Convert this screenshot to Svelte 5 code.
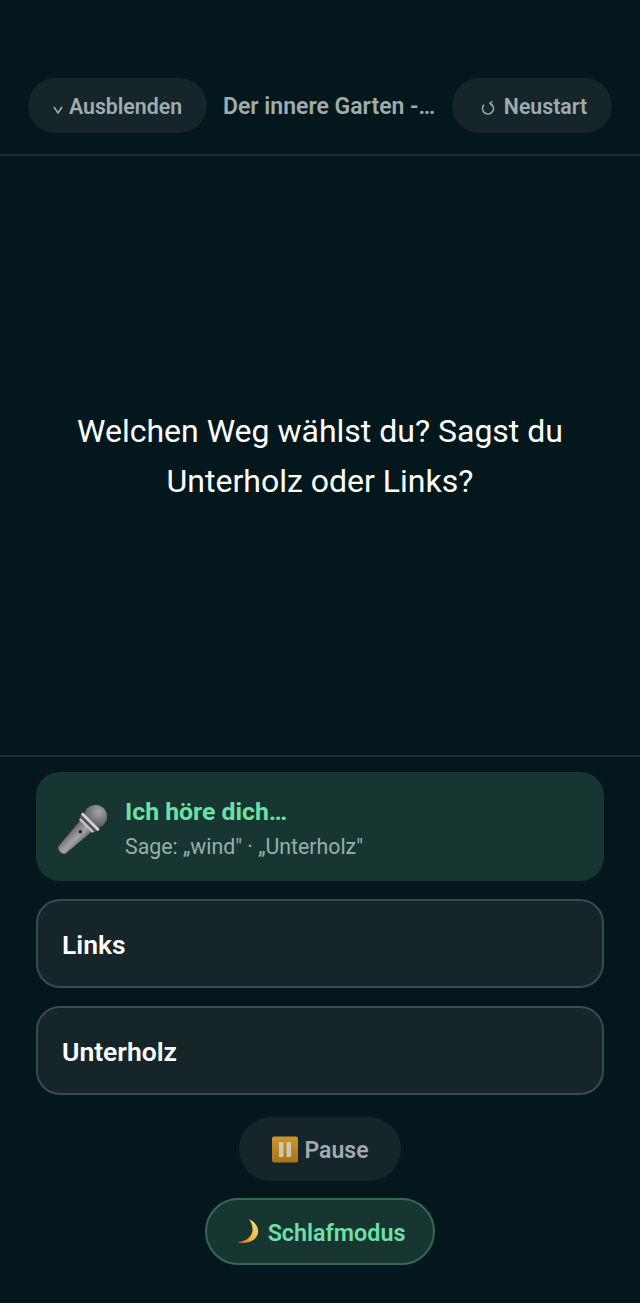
<script>
	let title = "Der innere Garten - Ein Schlafabenteuer";
	let prompt = "Welchen Weg wählst du? Sagst du Unterholz oder Links?";
	let choices = ["Links", "Unterholz"];
</script>

<div class="screen">
	<header class="topbar">
		<button class="pill hide">
			<svg class="chev" width="10" height="8" viewBox="0 0 10 8"><path d="M1 1l4 6 4-6" fill="none" stroke="currentColor" stroke-width="1.6"/></svg>
			<span>Ausblenden</span>
		</button>
		<span class="title">{title}</span>
		<button class="pill restart">
			<svg class="reload" width="14" height="15" viewBox="0 0 14 15"><path d="M3 4.700A5.500 5.500 0 1 0 9 3.400" fill="none" stroke="currentColor" stroke-width="1.500"/><path d="M11.500 1.200L8.800 3.300l2.400 2.500" fill="none" stroke="currentColor" stroke-width="1.300"/></svg>
			<span>Neustart</span>
		</button>
	</header>

	<main class="story">
		<p>{prompt}</p>
	</main>

	<section class="controls">
		<div class="listening">
			<svg class="mic" width="52" height="52" viewBox="0 0 52 52">
				<defs>
					<linearGradient id="body" x1="0" y1="0" x2="1" y2="0">
						<stop offset="0" stop-color="#6b686d"/>
						<stop offset="0.6" stop-color="#a5a3a7"/>
						<stop offset="1" stop-color="#77747a"/>
					</linearGradient>
					<radialGradient id="head" cx="0.45" cy="0.25" r="0.8">
						<stop offset="0" stop-color="#a6a5a8"/>
						<stop offset="1" stop-color="#4e4c52"/>
					</radialGradient>
				</defs>
				<g transform="translate(39.500 14.500) rotate(45)">
					<path d="M-8 12H8L5 48Q0 52-5 48Z" fill="url(#body)"/>
					<circle r="11.500" fill="url(#head)"/>
					<rect x="-12" y="6" width="24" height="3" rx="1" fill="#d4d2d6"/>
					<rect x="-11" y="9" width="22" height="2.500" fill="#55535a"/>
					<rect x="-9.500" y="11.500" width="19" height="2.500" fill="#c4c2c6"/>
					<circle cy="21.500" r="1.800" fill="#2b2a2e"/>
				</g>
			</svg>
			<div class="listen-text">
				<strong>Ich höre dich…</strong>
				<span>Sage: „wind" · „Unterholz"</span>
			</div>
		</div>

		{#each choices as choice}
			<button class="choice"><span>{choice}</span></button>
		{/each}

		<button class="pill pause">
			<svg width="27" height="27" viewBox="0 0 27 27">
				<defs>
					<linearGradient id="amber" x1="0" y1="0" x2="0" y2="1">
						<stop offset="0" stop-color="#cb952e"/>
						<stop offset="1" stop-color="#a87418"/>
					</linearGradient>
				</defs>
				<rect x="1" y="0.500" width="26" height="26" rx="2" fill="url(#amber)"/>
				<rect x="8" y="6" width="4.500" height="15" fill="#cfc7b2"/>
				<rect x="15.500" y="6" width="4.500" height="15" fill="#cfc7b2"/>
			</svg>
			<span>Pause</span>
		</button>

		<button class="pill sleep">
			<svg width="24" height="27" viewBox="0 0 24 27">
				<defs>
					<linearGradient id="moon" x1="0.8" y1="0" x2="0.2" y2="1">
						<stop offset="0" stop-color="#f7dc72"/>
						<stop offset="0.65" stop-color="#f3b545"/>
						<stop offset="1" stop-color="#e5663a"/>
					</linearGradient>
				</defs>
				<path d="M12 1C18 4 22 9 21 15 20 22 10 27 0 24 8 24 14 20 15.500 13 16 8 14 4 12 1Z" fill="url(#moon)"/>
			</svg>
			<span>Schlafmodus</span>
		</button>
	</section>
</div>

<style>
	:global(body) {
		background: #04171d;
		font-family: Roboto, "Liberation Sans", sans-serif;
	}

	.screen {
		height: 1303px;
		display: flex;
		flex-direction: column;
		background: #04171d;
	}

	button {
		font-family: inherit;
		cursor: pointer;
	}

	button span {
		position: relative;
		top: 1px;
	}

	.topbar {
		display: flex;
		align-items: center;
		gap: 16px;
		padding: 78px 28px 21px;
		border-bottom: 2px solid #1b2e34;
	}

	.pill {
		display: inline-flex;
		align-items: center;
		justify-content: center;
		flex: none;
		border: none;
		border-radius: 32px;
		background: #15252a;
		color: #a0acac;
		font-size: 21.300px;
		font-weight: 600;
		height: 55px;
		padding: 0;
		white-space: nowrap;
	}

	.hide {
		width: 179px;
	}

	.restart {
		width: 160px;
		padding-left: 4px;
	}

	.chev {
		margin: 9px 6px 0 0;
	}

	.reload {
		margin: 3px 9px 0 0;
	}

	.title {
		flex: 1;
		min-width: 0;
		overflow: hidden;
		white-space: nowrap;
		text-overflow: ellipsis;
		color: #a0acac;
		font-size: 23px;
		font-weight: 600;
		padding-top: 2px;
	}

	.story {
		flex: none;
		height: 601px;
		display: flex;
		align-items: center;
		justify-content: center;
		padding: 0 64px;
		box-sizing: border-box;
		border-bottom: 2px solid #1b2e34;
	}

	.story p {
		margin: 0;
		color: #fff;
		font-size: 32px;
		line-height: 50px;
		text-align: center;
	}

	.controls {
		display: flex;
		flex-direction: column;
		align-items: center;
		padding: 15px 36px 0;
	}

	.listening {
		align-self: stretch;
		box-sizing: border-box;
		height: 109px;
		display: flex;
		align-items: center;
		gap: 17px;
		padding: 0 20px;
		border-radius: 24px;
		background: #173631;
	}

	.mic {
		flex: none;
		margin-top: 2px;
	}

	.listen-text {
		display: flex;
		flex-direction: column;
		gap: 5px;
		padding-top: 3px;
	}

	.listen-text strong {
		color: #6ee0a6;
		font-size: 24.800px;
		font-weight: 700;
		line-height: 32px;
	}

	.listen-text span {
		color: #97aeaa;
		font-size: 21.300px;
		line-height: 28px;
	}

	.choice {
		align-self: stretch;
		height: 89px;
		margin-top: 18px;
		padding: 0 24px;
		text-align: left;
		border: 2px solid #3a4a50;
		border-radius: 24px;
		background: #15252a;
		color: #fff;
		font-size: 26.500px;
		font-weight: 600;
	}

	.pause {
		margin-top: 22px;
		height: 64px;
		width: 162px;
		gap: 6px;
		border-radius: 32px;
		font-size: 23px;
	}

	.sleep {
		margin-top: 17px;
		height: 67px;
		width: 230px;
		gap: 7px;
		padding-left: 2px;
		border: 2px solid #2f6a58;
		border-radius: 34px;
		background: #173631;
		color: #6ee0a6;
		font-size: 23.300px;
	}
</style>
